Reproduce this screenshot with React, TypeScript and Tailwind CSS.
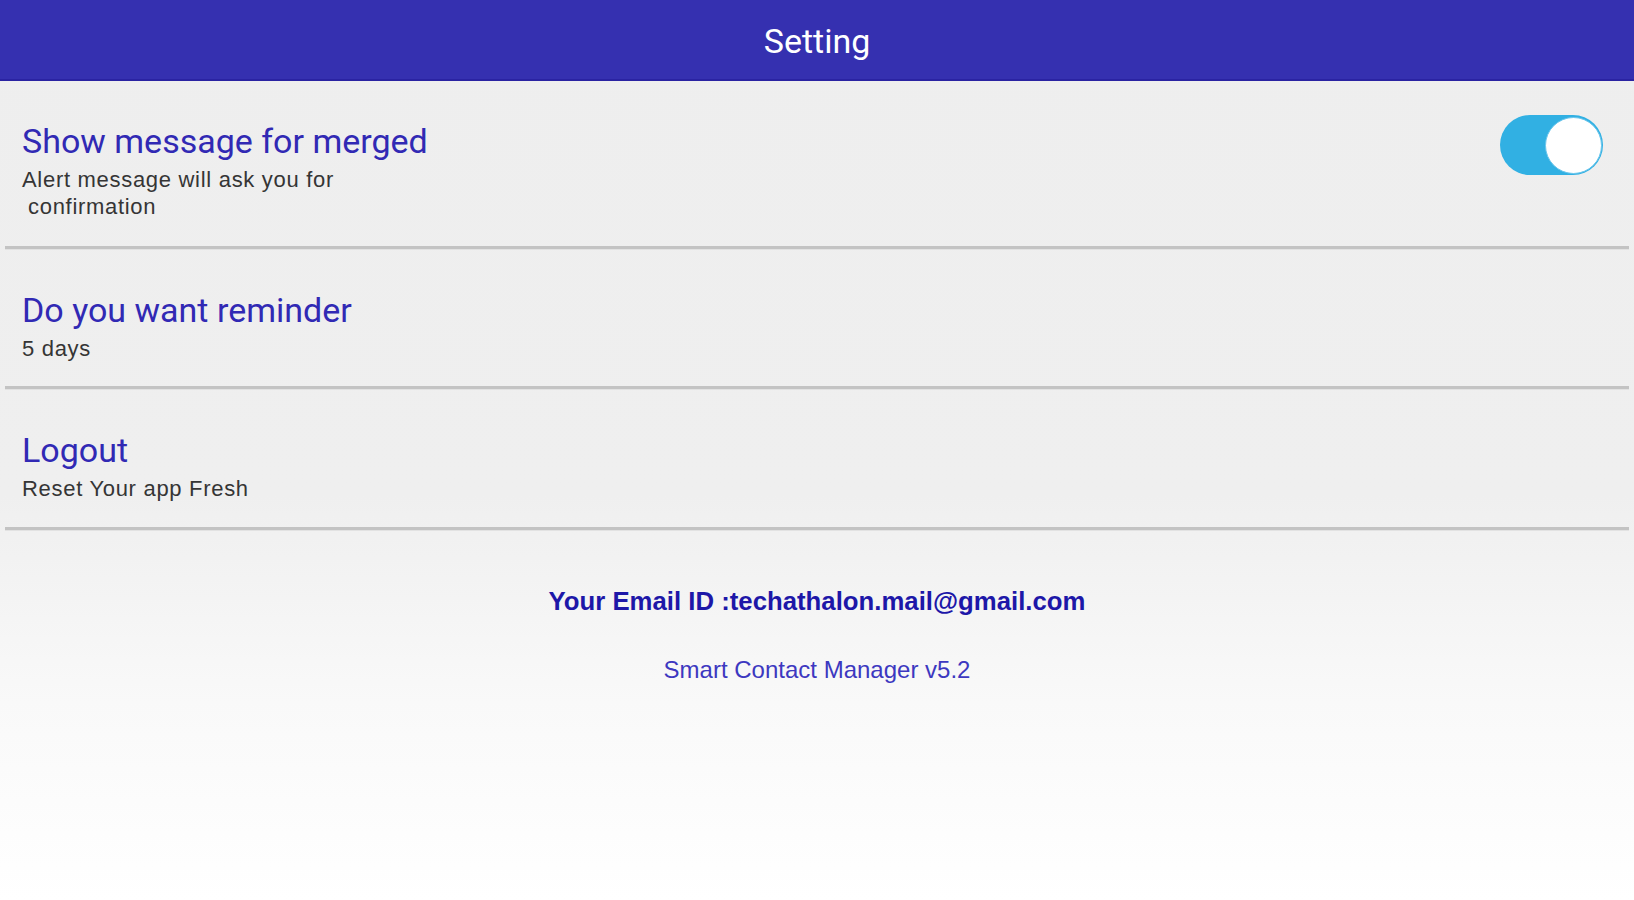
import React from "react";

function Row({
  title,
  subtitle,
  height,
  pt,
  right,
}: {
  title: string;
  subtitle: React.ReactNode;
  height: string;
  pt: string;
  right?: React.ReactNode;
}) {
  return (
    <div className={`flex justify-between ${height}`}>
      <div className={`pl-[22px] ${pt}`}>
        <div className="text-[34px] leading-[40px] text-[#3129b4]">{title}</div>
        <div
          className="mt-[5px] text-[22px] leading-[27px] tracking-[0.7px] text-[#353535]"
          style={{ fontFamily: "'Liberation Sans', Arial, sans-serif" }}
        >
          {subtitle}
        </div>
      </div>
      {right}
    </div>
  );
}

function Divider() {
  return <div className="mx-[5px] h-[3px] bg-[#c3c3c3] shadow-[0_1px_0_#e2e2e2]" />;
}

export default function App() {
  return (
    <div
      className="w-[1634px] h-[900px] overflow-hidden bg-[linear-gradient(180deg,#eeeeee_0%,#efefef_55%,#f9f9f9_78%,#ffffff_100%)]"
      style={{ fontFamily: "Roboto, 'Liberation Sans', Arial, sans-serif" }}
    >
      <header className="h-[81px] bg-[#3530b0] border-b-[2px] border-[#2a23a2] flex items-center justify-center pt-[3px]">
        <span className="text-white text-[34px] leading-[40px]">Setting</span>
      </header>

      <Row
        height="h-[165px]"
        pt="pt-[40px]"
        title="Show message for merged"
        subtitle={
          <>
            <div>Alert message will ask you for</div>
            <div className="pl-[6px]">confirmation</div>
          </>
        }
        right={
          <div className="pt-[34px] pr-[31px]">
            <div className="relative w-[103px] h-[60px] rounded-full bg-[#31b0e3]">
              <div className="absolute right-[1px] top-[1.5px] w-[57px] h-[57px] rounded-full bg-white border border-[#6cc6ec]" />
            </div>
          </div>
        }
      />
      <Divider />
      <Row height="h-[137px]" pt="pt-[41px]" title="Do you want reminder" subtitle="5 days" />
      <Divider />
      <Row height="h-[138px]" pt="pt-[41px]" title="Logout" subtitle="Reset Your app Fresh" />
      <Divider />

      <div
        className="flex flex-col items-center mt-[57px]"
        style={{ fontFamily: "'Liberation Sans', Arial, sans-serif" }}
      >
        <div className="text-[25.75px] leading-[28px] font-bold text-[#1d17a8]">
          Your Email ID :techathalon.mail@gmail.com
        </div>
        <div className="mt-[42px] text-[24px] leading-[26px] text-[#3d38c0]">Smart Contact Manager v5.2</div>
      </div>
    </div>
  );
}
